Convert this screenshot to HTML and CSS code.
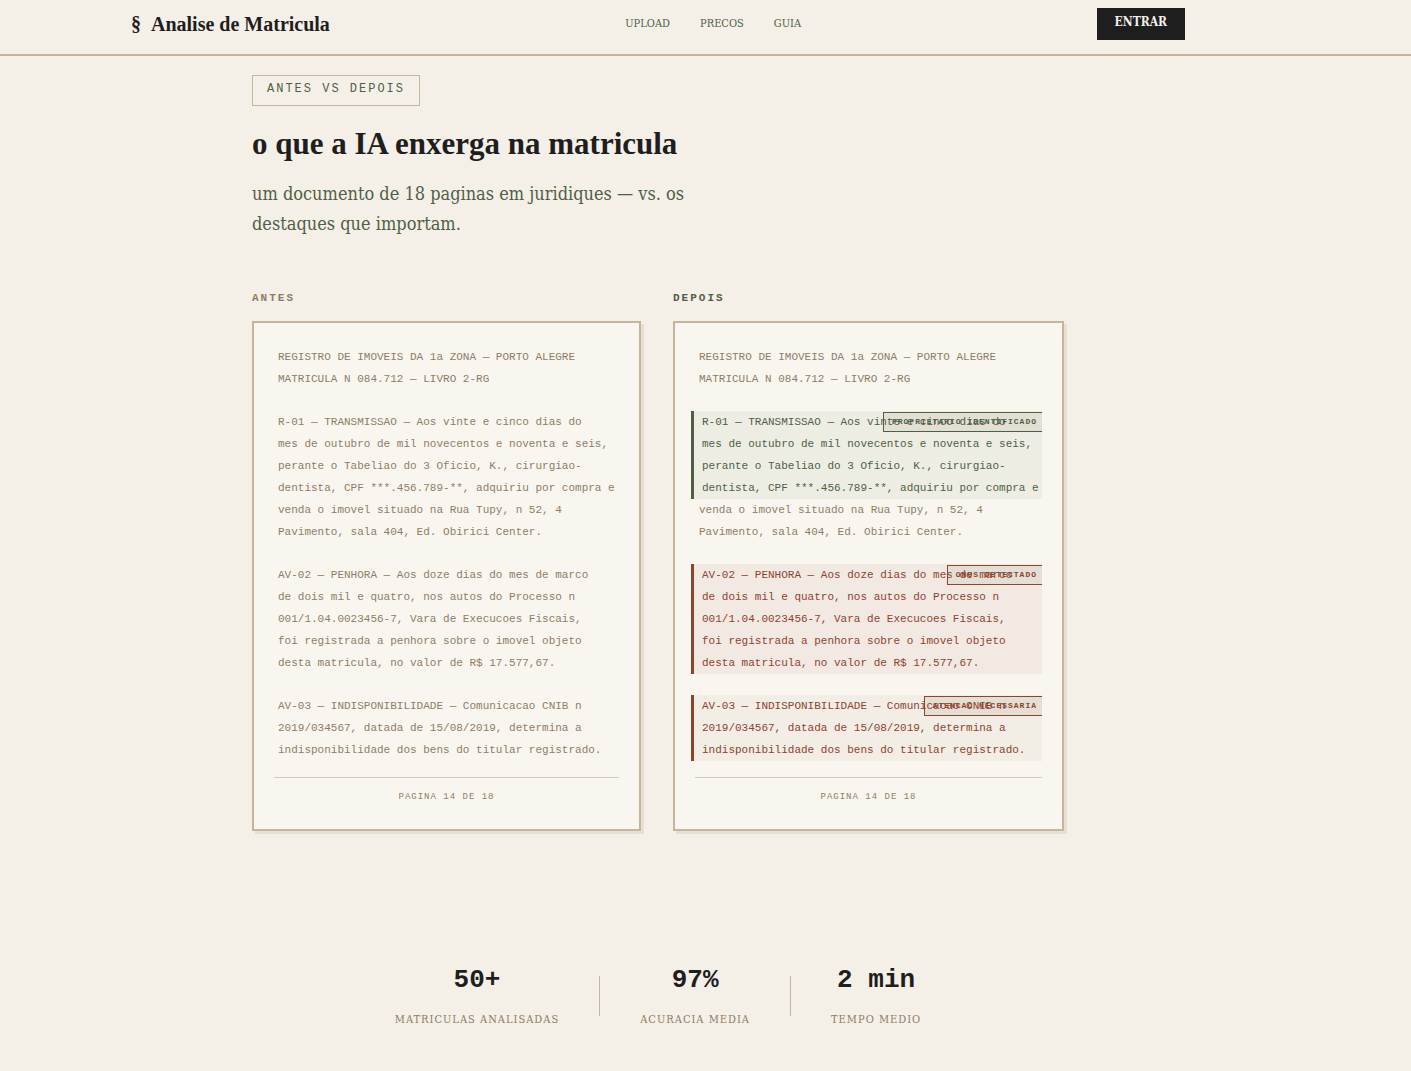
FILE: index.html
```html
<!DOCTYPE html>
<html lang="pt-BR">
<head>
<meta charset="utf-8">
<meta name="viewport" content="width=device-width, initial-scale=1">
<title>Analise de Matricula</title>
<link rel="stylesheet" href="styles.css">
</head>
<body>
<header class="site-header">
  <div class="header-inner">
    <a class="logo" href="#"><span>§</span><span>Analise de Matricula</span></a>
    <nav class="nav">
      <a href="#upload">UPLOAD</a>
      <a href="#precos">PRECOS</a>
      <a href="#guia">GUIA</a>
    </nav>
    <button class="enter" type="button">ENTRAR</button>
  </div>
</header>
<main class="page">
  <section class="compare">
    <p class="tag">ANTES VS DEPOIS</p>
    <h1 class="title">o que a IA enxerga na matricula</h1>
    <p class="lead">um documento de 18 paginas em juridiques — vs. os destaques que importam.</p>
    <div class="columns">
      <div class="column">
        <h2 class="label">ANTES</h2>
        <article class="sheet">
          <div class="text">
            <p>REGISTRO DE IMOVEIS DA 1a ZONA — PORTO ALEGRE<br>MATRICULA N 084.712 — LIVRO 2-RG</p>
            <p>R-01 — TRANSMISSAO — Aos vinte e cinco dias do<br>mes de outubro de mil novecentos e noventa e seis,<br>perante o Tabeliao do 3 Oficio, K., cirurgiao-<br>dentista, CPF ***.456.789-**, adquiriu por compra e<br>venda o imovel situado na Rua Tupy, n 52, 4<br>Pavimento, sala 404, Ed. Obirici Center.</p>
            <p>AV-02 — PENHORA — Aos doze dias do mes de marco<br>de dois mil e quatro, nos autos do Processo n<br>001/1.04.0023456-7, Vara de Execucoes Fiscais,<br>foi registrada a penhora sobre o imovel objeto<br>desta matricula, no valor de R$ 17.577,67.</p>
            <p>AV-03 — INDISPONIBILIDADE — Comunicacao CNIB n<br>2019/034567, datada de 15/08/2019, determina a<br>indisponibilidade dos bens do titular registrado.</p>
          </div>
          <footer class="folio">PAGINA 14 DE 18</footer>
        </article>
      </div>
      <div class="column">
        <h2 class="label label-after">DEPOIS</h2>
        <article class="sheet">
          <div class="text">
            <p>REGISTRO DE IMOVEIS DA 1a ZONA — PORTO ALEGRE<br>MATRICULA N 084.712 — LIVRO 2-RG</p>
            <p><span class="mark owner"><span class="note">PROPRIETARIO IDENTIFICADO</span>R-01 — TRANSMISSAO — Aos vinte e cinco dias do<br>mes de outubro de mil novecentos e noventa e seis,<br>perante o Tabeliao do 3 Oficio, K., cirurgiao-<br>dentista, CPF ***.456.789-**, adquiriu por compra e</span>venda o imovel situado na Rua Tupy, n 52, 4<br>Pavimento, sala 404, Ed. Obirici Center.</p>
            <p><span class="mark lien"><span class="note">ONUS DETECTADO</span>AV-02 — PENHORA — Aos doze dias do mes de marco<br>de dois mil e quatro, nos autos do Processo n<br>001/1.04.0023456-7, Vara de Execucoes Fiscais,<br>foi registrada a penhora sobre o imovel objeto<br>desta matricula, no valor de R$ 17.577,67.</span></p>
            <p><span class="mark alert"><span class="note">ATENCAO NECESSARIA</span>AV-03 — INDISPONIBILIDADE — Comunicacao CNIB n<br>2019/034567, datada de 15/08/2019, determina a<br>indisponibilidade dos bens do titular registrado.</span></p>
          </div>
          <footer class="folio">PAGINA 14 DE 18</footer>
        </article>
      </div>
    </div>
  </section>
  <section class="stats">
    <div class="stat"><strong>50+</strong><span>MATRICULAS ANALISADAS</span></div>
    <div class="rule"></div>
    <div class="stat"><strong>97%</strong><span>ACURACIA MEDIA</span></div>
    <div class="rule"></div>
    <div class="stat"><strong>2 min</strong><span>TEMPO MEDIO</span></div>
  </section>
</main>
</body>
</html>
```

FILE: styles.css
```css
:root {
  --paper: #f4efe7;
  --sheet: #f9f6f0;
  --ink: #1e1e1e;
  --green: #4f5f45;
  --red: #8f432c;
  --brown: #8e7d65;
  --tan: #c5b59a;
  --mono: "Liberation Mono", "Courier New", monospace;
  --type: "DejaVu Serif Condensed", "DejaVu Serif", serif;
  --display: "Liberation Serif", "Times New Roman", serif;
  --side: 95px;
}
* { box-sizing: border-box; }
body {
  margin: 0;
  background: var(--paper);
  color: var(--ink);
  font-family: var(--mono);
}
h1, h2, p { margin: 0; }

.site-header {
  padding: 8px var(--side) 14px 0;
  border-bottom: 2px solid var(--tan);
}
.header-inner {
  display: flex;
  align-items: center;
  justify-content: space-between;
  max-width: 1054px;
  margin: 0 auto;
}
.logo {
  display: flex;
  gap: 10px;
  color: var(--ink);
  font: bold 20px/32px var(--display);
  text-decoration: none;
}
.nav { display: flex; gap: 30px; }
.nav a {
  color: var(--green);
  font: 11px/28px var(--type);
  text-decoration: none;
}
.enter {
  height: 32px;
  padding: 0 18px 4px;
  border: 0;
  background: var(--ink);
  color: var(--paper);
  font: bold 12px/28px var(--type);
}

.page { padding-right: var(--side); }
.compare { max-width: 812px; margin: 0 auto; padding-top: 19px; }
.tag {
  width: fit-content;
  padding: 5px 14px 8px;
  border: 1px solid var(--tan);
  color: var(--green);
  font-size: 12px;
  line-height: 16px;
  letter-spacing: 2px;
}
.title {
  margin-top: 16px;
  font: bold 31px/44px var(--display);
}
.lead {
  max-width: 480px;
  margin-top: 13px;
  color: var(--green);
  font: 18px/30px var(--type);
}
.columns {
  display: grid;
  grid-template-columns: 389fr 391fr;
  gap: 32px;
  margin-top: 51px;
}
.label {
  margin-bottom: 15px;
  color: var(--brown);
  font-size: 11px;
  line-height: 16px;
  letter-spacing: 2px;
}
.label-after { color: var(--green); }
.sheet {
  padding: 0 20px;
  border: 2px solid var(--tan);
  background: var(--sheet);
  box-shadow: 3px 3px 0 #e6dfd4;
}
.text {
  display: flex;
  flex-direction: column;
  gap: 21px;
  margin-left: -4px;
  padding: 23px 0 0 8px;
  overflow: hidden;
  color: var(--brown);
  font-size: 11px;
  line-height: 22px;
  white-space: nowrap;
}
.mark {
  display: block;
  position: relative;
  isolation: isolate;
  margin-left: -8px;
  padding-left: 8px;
  border-left: 3px solid currentColor;
}
.owner { color: var(--green); background: #edede4; }
.lien { color: var(--red); background: #f2e9e3; }
.alert { color: var(--red); background: #f2ede5; }
/* the note sits behind the line that it annotates */
.note {
  position: absolute;
  z-index: -1;
  top: 1px;
  right: -4px;
  padding: 0 8px;
  border: 1px solid currentColor;
  background: #e4dfd5;
  font-size: 8px;
  font-weight: bold;
  line-height: 18px;
  letter-spacing: 1px;
}
.folio {
  margin-top: 16px;
  padding: 11px 0 24px;
  border-top: 1px solid #cfcac2;
  color: var(--brown);
  font-size: 9px;
  line-height: 16px;
  letter-spacing: 1px;
  text-align: center;
}

.stats {
  display: flex;
  align-items: center;
  justify-content: center;
  gap: 40px;
  padding: 131px 0 40px;
}
.stat {
  display: flex;
  flex-direction: column;
  align-items: center;
  gap: 12px;
}
.stat strong { font-size: 26px; line-height: 36px; }
.stat span {
  color: var(--brown);
  font: 11px/20px var(--type);
  letter-spacing: 1px;
}
.rule { width: 1px; height: 40px; background: var(--tan); }

@media (max-width: 1000px) {
  :root { --side: 0px; }
  .header-inner, .compare { padding-left: 24px; padding-right: 24px; }
  .columns { grid-template-columns: 1fr; }
  .stats { flex-wrap: wrap; }
}
```
